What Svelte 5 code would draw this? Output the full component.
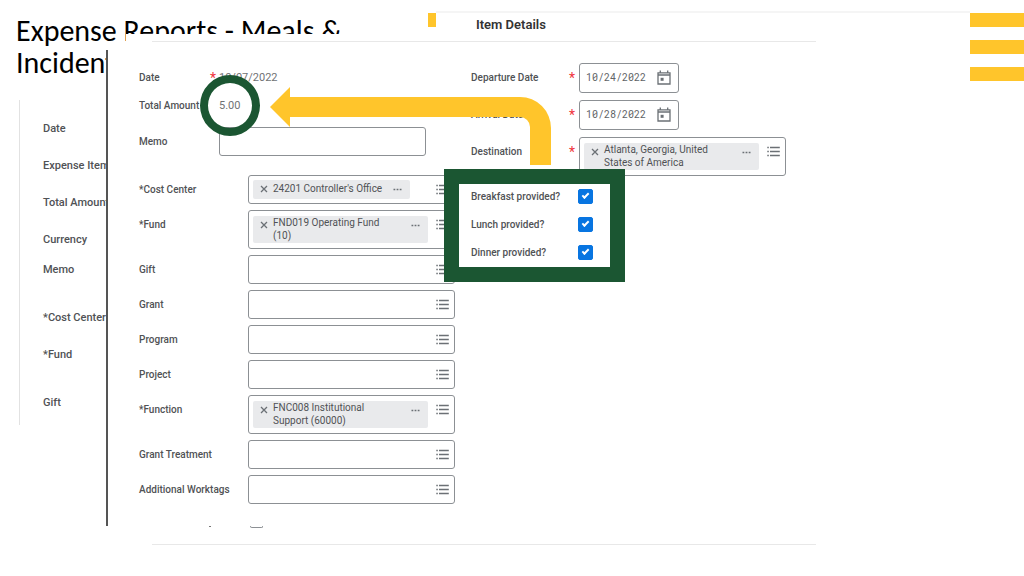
<script>
	const backLabels = [
		{ text: 'Date' },
		{ text: 'Expense Item' },
		{ text: 'Total Amount' },
		{ text: 'Currency', size: 'short' },
		{ text: 'Memo', size: 'tall' },
		{ text: '*Cost Center' },
		{ text: '*Fund', size: 'tall' },
		{ text: 'Gift' }
	];

	const worktags = [
		{ id: 'cost-center', label: '*Cost Center', value: ["24201 Controller's Office"] },
		{ id: 'fund', label: '*Fund', value: ['FND019 Operating Fund', '(10)'] },
		{ id: 'gift', label: 'Gift' },
		{ id: 'grant', label: 'Grant' },
		{ id: 'program', label: 'Program' },
		{ id: 'project', label: 'Project' },
		{ id: 'function', label: '*Function', value: ['FNC008 Institutional', 'Support (60000)'] },
		{ id: 'grant-treatment', label: 'Grant Treatment' },
		{ id: 'additional', label: 'Additional Worktags' }
	];

	const destination = ['Atlanta, Georgia, United', 'States of America'];

	let memo = $state('');
	let dates = $state([
		{ id: 'departure', label: 'Departure Date', value: '10/24/2022' },
		{ id: 'arrival', label: 'Arrival Date', value: '10/28/2022' }
	]);
	let meals = $state([
		{ id: 'breakfast', label: 'Breakfast provided?', provided: true },
		{ id: 'lunch', label: 'Lunch provided?', provided: true },
		{ id: 'dinner', label: 'Dinner provided?', provided: true }
	]);
</script>

{#snippet prompt(id, label, value)}
	<div class="prompt" class:double={value && value.length > 1}>
		{#if value}
			<div class="chip">
				<button type="button" aria-label="Remove">
					<svg width="8" height="8" viewBox="0 0 8 8"><path d="M1 1l6 6M7 1L1 7" /></svg>
				</button>
				<span class="chip-text">
					{#each value as line}
						<span>{line}</span>
					{/each}
				</span>
				<button type="button" class="more" aria-label="More">
					<svg width="9" height="3" viewBox="0 0 9 3">
						<path d="M0.5 1.5h1.8M3.6 1.5h1.8M6.7 1.5h1.8" />
					</svg>
				</button>
			</div>
		{:else}
			<input {id} type="text" />
		{/if}
		<button type="button" class="list" aria-label={'Choose ' + label}>
			<svg width="13" height="11" viewBox="0 0 13 11">
				<path d="M0.3 1.5h1.5M3 1.5h9.8M0.3 5.5h1.5M3 5.5h9.8M0.3 9.5h1.5M3 9.5h9.8" />
			</svg>
		</button>
	</div>
{/snippet}

<main class="slide">
	<h1>
		<span>Expense Reports - Meals &amp;</span>
		<span>Incident</span>
	</h1>

	<aside>
		<ul>
			{#each backLabels as row}
				<li class={row.size}>{row.text}</li>
			{/each}
		</ul>
	</aside>

	<div class="stub"></div>

	<div class="rule"></div>
	<header class="item-header">
		<h2>Item Details</h2>
	</header>

	<form class="panel">
		<div class="column">
			<div class="row plain">
				<span class="label">Date</span>
				<span class="star">*</span>
				<span class="value">10/07/2022</span>
			</div>
			<div class="row plain">
				<span class="label">Total Amount</span>
				<span class="star"></span>
				<span class="value">5.00</span>
			</div>
			<div class="row memo">
				<label class="label" for="memo">Memo</label>
				<span class="star"></span>
				<input id="memo" class="box" type="text" bind:value={memo} />
			</div>
			<div class="worktags">
				{#each worktags as tag}
					<div class="row">
						<label class="label wide" for={tag.id}>{tag.label}</label>
						{@render prompt(tag.id, tag.label, tag.value)}
					</div>
				{/each}
			</div>
		</div>

		<div class="column details">
			{#each dates as date}
				<div class="row">
					<label class="label" for={date.id}>{date.label}</label>
					<span class="star">*</span>
					<div class="date">
						<input id={date.id} type="text" bind:value={date.value} />
						<button type="button" aria-label="Open calendar">
							<svg width="14" height="16" viewBox="0 0 14 16">
								<path d="M1 2.8h12v11.2h-12zM1 5h12M3.3 0.6v2.4M10.7 0.6v2.4" />
								<path class="dot" d="M3.6 7.8h3v3h-3z" />
							</svg>
						</button>
					</div>
				</div>
			{/each}
			<div class="row">
				<span class="label">Destination</span>
				<span class="star">*</span>
				{@render prompt('destination', 'Destination', destination)}
			</div>
			<div class="meals">
				{#each meals as meal}
					<div class="row">
						<label class="label" for={meal.id}>{meal.label}</label>
						<input id={meal.id} type="checkbox" bind:checked={meal.provided} />
					</div>
				{/each}
			</div>
		</div>

		<svg class="arrow" width="281" height="78" viewBox="0 0 281 78">
			<path d="M0 20L20 0V10H250A31 31 0 0 1 281 41V78H260V40A10 10 0 0 0 250 30H20V40Z" />
		</svg>
		<div class="ring"></div>
		<div class="frame"></div>
	</form>

	<div class="stripes">
		<span></span>
		<span></span>
		<span></span>
	</div>

	<div class="cut-row">
		<span class="tick"></span>
		<span class="box-edge"></span>
	</div>
	<div class="rule bottom"></div>
</main>

<style>
	:global(body) {
		margin: 0;
		background: #fff;
	}

	.slide {
		position: relative;
		min-height: 100vh;
		overflow: hidden;
		box-sizing: border-box;
		padding: 15px 16px 0;
		font-family: Roboto, 'Liberation Sans', sans-serif;
		font-size: 10px;
		line-height: 14px;
		color: #505255;
	}

	h1 {
		margin: 0;
		font: 400 30px/32px Carlito, Lato, 'Noto Sans', sans-serif;
		color: #000;
	}

	h1 span {
		display: block;
		width: fit-content;
	}

	aside {
		margin: 21px 0 0 3px;
		padding: 22px 0 15px 23px;
		border-left: 1px solid #e2e2e2;
	}

	ul {
		margin: 0;
		padding: 0;
		list-style: none;
		font-size: 11px;
		font-weight: 500;
	}

	li {
		height: 37px;
	}

	li.short {
		height: 30px;
	}

	li.tall {
		height: 48px;
	}

	li:last-child {
		height: 14px;
	}

	/* yellow corner decoration */
	.stripes {
		position: absolute;
		top: 13px;
		right: 0;
		width: 54px;
		display: flex;
		flex-direction: column;
		gap: 13px;
	}

	.stripes span,
	.stub {
		height: 14px;
		background: #ffc52b;
	}

	.stub {
		position: absolute;
		top: 13px;
		left: 428px;
		width: 8px;
	}

	/* white strip over the title, closed by a thin line */
	.rule {
		position: absolute;
		top: 34px;
		left: 126px;
		right: 208px;
		height: 16px;
		background: linear-gradient(#e8e8e8, #e8e8e8) 26px 7px / 100% 1px no-repeat #fff;
	}

	.rule.bottom {
		top: 537px;
	}

	.item-header {
		position: absolute;
		top: 11px;
		left: 436px;
		right: 54px;
		border-top: 2px solid #f5f5f5;
		padding: 3px 40px 0;
	}

	h2 {
		margin: 0;
		font-size: 13px;
		line-height: 18px;
		font-weight: 600;
		color: #333;
	}

	.panel {
		position: absolute;
		top: 50px;
		left: 106px;
		right: 0;
		display: flex;
		gap: 16px;
		box-sizing: border-box;
		padding: 13px 0 22px 31px;
		border-left: 2px solid #555;
		background: #fff;
	}

	.column {
		width: 316px;
	}

	.row {
		display: flex;
		align-items: flex-start;
	}

	.plain {
		height: 28px;
	}

	.label {
		width: 68px;
		flex: none;
		font-size: 10px;
		font-weight: 500;
		line-height: 29px;
		white-space: nowrap;
	}

	.label.wide {
		width: 109px;
	}

	.star {
		width: 12px;
		flex: none;
		text-align: center;
		font-size: 14px;
		line-height: 31px;
		height: 28px;
		color: #f0343c;
	}

	.value {
		line-height: 29px;
		font-size: 11px;
		color: #707274;
	}

	.memo {
		margin-top: 8px;
	}

	input,
	button {
		margin: 0;
		padding: 0;
		border: 0;
		background: none;
		font: inherit;
		color: inherit;
		outline: none;
	}

	button {
		display: flex;
		flex: none;
	}

	svg {
		display: block;
		fill: none;
		stroke: #6b7075;
		stroke-width: 1.3;
	}

	.box,
	.prompt,
	.date {
		box-sizing: border-box;
		width: 207px;
		height: 29px;
		border: 1px solid #8c9094;
		border-radius: 3px;
		background: #fff;
	}

	.prompt {
		display: flex;
		align-items: flex-start;
		padding: 4px 5px 4px 4px;
	}

	.prompt.double {
		height: 39px;
		padding-top: 5px;
	}

	.prompt input {
		flex: 1;
		min-width: 0;
		height: 19px;
	}

	.list {
		margin: 4px 0 0 auto;
	}

	.double .list {
		margin-top: 3px;
	}

	.chip {
		display: flex;
		align-items: flex-start;
		box-sizing: border-box;
		min-height: 19px;
		padding: 0 8px 0 7px;
		border-radius: 2px;
		background: #e9eaec;
	}

	.double .chip {
		width: 175px;
		height: 27px;
	}

	.chip button {
		margin-top: 5px;
	}

	.chip .more {
		margin: 8px 0 0 auto;
		padding-left: 11px;
	}

	.chip-text {
		display: flex;
		flex-direction: column;
		margin-left: 5px;
		line-height: 18px;
		white-space: nowrap;
	}

	.double .chip-text {
		line-height: 13px;
	}

	.worktags {
		display: flex;
		flex-direction: column;
		gap: 6px;
		margin-top: 19px;
	}

	.details .label {
		width: 94px;
	}

	.details > .row {
		margin-bottom: 7px;
	}

	.details .star {
		width: 14px;
	}

	.date {
		display: flex;
		align-items: center;
		justify-content: space-between;
		width: 100px;
		height: 30px;
		padding: 0 7px 0 6px;
	}

	.date input {
		width: 66px;
		font-family: 'Roboto Mono', 'DejaVu Sans Mono', monospace;
		color: #606366;
	}

	.dot {
		fill: #6b7075;
		stroke: none;
	}

	.meals {
		margin-top: -1px;
	}

	.meals .row {
		align-items: center;
		height: 28px;
	}

	.meals .label {
		width: 107px;
	}

	input[type='checkbox'] {
		appearance: none;
		width: 15px;
		height: 15px;
		border-radius: 2px;
		border: 1px solid #8c9094;
	}

	input[type='checkbox']:checked {
		border-color: #0875e1;
		background: #0875e1;
		display: grid;
		place-items: center;
	}

	input[type='checkbox']:checked::before {
		content: '';
		width: 5px;
		height: 2px;
		border: solid #fff;
		border-width: 0 0 2px 2px;
		transform: translateY(-1px) rotate(-45deg);
	}

	/* callouts over the form */
	.arrow {
		position: absolute;
		top: 37px;
		left: 162px;
		fill: #ffc52b;
		stroke: none;
	}

	.ring {
		position: absolute;
		top: 25px;
		left: 92px;
		box-sizing: border-box;
		width: 60px;
		height: 61px;
		border: 8px solid #1b5632;
		border-radius: 50%;
	}

	.frame {
		position: absolute;
		top: 119px;
		left: 336px;
		box-sizing: border-box;
		width: 181px;
		height: 113px;
		border: 15px solid #1b5632;
		pointer-events: none;
	}

	/* last form row, cut off by the panel edge */
	.cut-row {
		position: absolute;
		top: 526px;
		left: 209px;
		display: flex;
		gap: 39px;
	}

	.tick {
		width: 2px;
		height: 1px;
		background: #777;
	}

	.box-edge {
		width: 13px;
		height: 2px;
		box-sizing: border-box;
		border: 1px solid #8c9094;
		border-top: 0;
		border-radius: 0 0 3px 3px;
	}
</style>
